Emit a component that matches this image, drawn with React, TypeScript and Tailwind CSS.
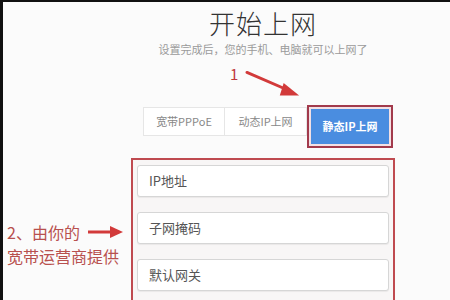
const cjk = { fontFamily: '"Noto Sans CJK SC", "Noto Sans", sans-serif' };

function RedArrow({ className }: { className: string }) {
  return (
    <svg className={className} viewBox="0 0 60 30" fill="none">
      <path d="M2 3 L46 22" stroke="#d23a3a" strokeWidth="3" strokeLinecap="round" />
      <path d="M40 14 L56 27 L36 27 Z" fill="#d23a3a" />
    </svg>
  );
}

export default function App() {
  const fields = ['IP地址', '子网掩码', '默认网关'];

  return (
    <div
      className="relative w-[450px] h-[300px] overflow-hidden bg-[#fbfbfb] border-t-[2px] border-l-[3px] border-[#111]"
      style={cjk}
    >
      {/* annotation 1 */}
      <span className="absolute left-[227px] top-[64px] text-[15px] leading-none text-[#c0393b]">1</span>
      <RedArrow className="absolute left-[242px] top-[67px] w-[58px] h-[30px]" />

      {/* annotation 2 */}
      <div className="absolute left-[4px] top-[218px] text-[16px] leading-[24px] text-[#b8504e]">
        <div className="flex items-center">
          <span>2、由你的</span>
          <svg className="ml-[8px] w-[36px] h-[14px]" viewBox="0 0 36 14">
            <path d="M0 7 L24 7" stroke="#d23a3a" strokeWidth="3" />
            <path d="M22 1 L35 7 L22 13 Z" fill="#d23a3a" />
          </svg>
        </div>
        <div>宽带运营商提供</div>
      </div>

      <div className="ml-[128px] w-[264px] flex flex-col items-center">
        <h1 className="mt-[4px] text-[26px] leading-[34px] text-[#333] font-light tracking-[1px]">开始上网</h1>
        <p className="mt-[1px] text-[11px] leading-[16px] text-[#9a9a9a]">设置完成后，您的手机、电脑就可以上网了</p>

        <div className="mt-[48px] w-[250px] ml-[10px] flex items-start">
          <div className="mt-[2px] w-[82px] h-[29px] flex items-center justify-center border border-[#e6e6e6] bg-white text-[11px] text-[#888]">
            宽带PPPoE
          </div>
          <div className="mt-[2px] w-[82px] h-[29px] flex items-center justify-center border border-l-0 border-[#e6e6e6] bg-white text-[11px] text-[#888]">
            动态IP上网
          </div>
          <div className="w-[86px] h-[43px] p-[2px] border-[2px] border-[#a23a4c] bg-[#f3e0e4]">
            <div className="h-full flex items-center justify-center bg-[#4a8de0] text-[11px] font-bold text-white">
              静态IP上网
            </div>
          </div>
        </div>

        <div className="mt-[10px] w-[264px] h-[200px] border-[2px] border-[#bf4a50] bg-[#f8f6f6] px-[4px] pt-[5px] flex flex-col gap-[15px]">
          {fields.map((f) => (
            <div
              key={f}
              className="h-[32px] flex items-center px-[11px] bg-white border border-[#d6d6d6] rounded-[3px] shadow-[0_1px_1px_rgba(0,0,0,0.06)] text-[13px] text-[#555]"
            >
              {f}
            </div>
          ))}
          <div className="h-[32px] bg-white border border-[#d6d6d6] rounded-[3px]" />
        </div>
      </div>
    </div>
  );
}
